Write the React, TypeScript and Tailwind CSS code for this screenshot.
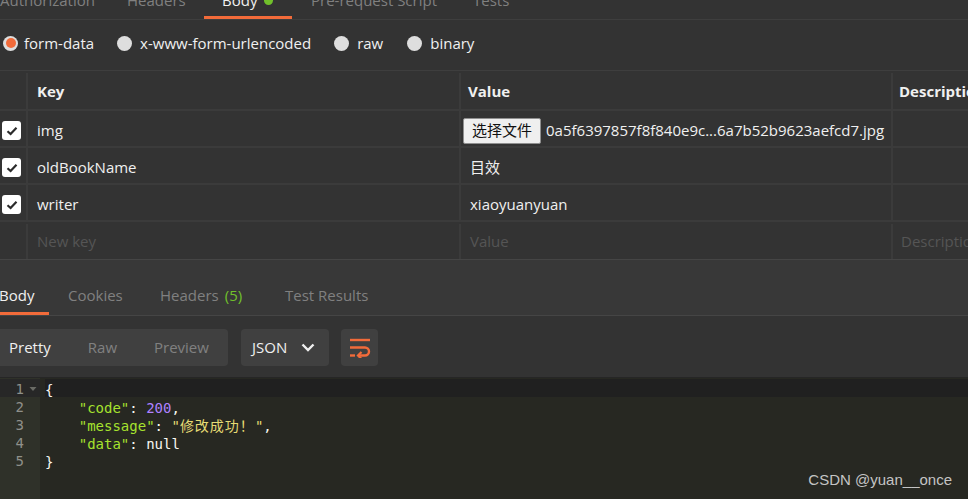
import React from 'react';

const ui = { fontFamily: '"Open Sans", "Noto Sans CJK SC", sans-serif' };
const mono = { fontFamily: '"DejaVu Sans Mono", "Noto Sans CJK SC", monospace' };

const topTabs = [
  { label: 'Authorization', w: 'w-[110px]', pl: 'pl-0' },
  { label: 'Headers', w: 'w-[94px]', pl: 'pl-[17px]' },
  { label: 'Body', w: 'w-[88px]', pl: 'pl-[18px]', active: true },
  { label: 'Pre-request Script', w: 'w-[162px]', pl: 'pl-[19px]' },
  { label: 'Tests', w: 'w-[80px]', pl: 'pl-[19px]' },
];

function Check() {
  return (
    <div className="w-[19px] h-[19px] rounded-[3px] bg-white flex items-center justify-center">
      <svg width="12" height="10" viewBox="0 0 12 10">
        <path d="M1.5 5.2 L4.6 8 L10.5 1.8" fill="none" stroke="#2b2b2b" strokeWidth="2.2" />
      </svg>
    </div>
  );
}

function Radio({ on }: { on?: boolean }) {
  return (
    <div className="w-[15px] h-[15px] rounded-full bg-[#dedede] flex items-center justify-center">
      {on && <div className="w-[10px] h-[10px] rounded-full bg-[#f26b3a]" />}
    </div>
  );
}

const rows = [
  { key: 'img', file: true },
  { key: 'oldBookName', value: '目效' },
  { key: 'writer', value: 'xiaoyuanyuan' },
];

export default function App() {
  return (
    <div className="w-[968px] h-[499px] overflow-hidden bg-[#333333] relative text-[15px]" style={ui}>
      {/* request tabs */}
      <div className="h-[20px] overflow-hidden border-b border-[#3e3e3e]">
        <div className="flex -mt-[10px]">
          {topTabs.map((t) => (
            <div
              key={t.label}
              className={`${t.w} ${t.pl} h-[29px] flex flex-col border-b-[3px] ${t.active ? 'border-[#f26b3a]' : 'border-transparent'}`}
            >
              <div className={`h-[20px] leading-[20px] flex items-center gap-[7px] ${t.active ? 'text-[#f0f0f0]' : 'text-[#808080]'}`}>
                {t.label}
                {t.active && <span className="w-[9px] h-[9px] rounded-full bg-[#71c02b]" />}
              </div>
            </div>
          ))}
        </div>
      </div>

      {/* body type radios */}
      <div className="h-[50px] flex items-center pl-[3px] pb-[4px] text-[#f0f0f0]">
        <Radio on />
        <span className="ml-[6px] mr-[23px]">form-data</span>
        <Radio />
        <span className="ml-[8px] mr-[23px]">x-www-form-urlencoded</span>
        <Radio />
        <span className="ml-[8px] mr-[24px]">raw</span>
        <Radio />
        <span className="ml-[8px]">binary</span>
      </div>

      {/* key / value table */}
      <div className="border-t border-[#3e3e3e] w-[1000px]">
        <div className="flex h-[40px] pt-[2px] border-b-2 border-[#3b3b3b] font-bold text-[#f0f0f0] text-[15px]">
          <div className="w-[28px] border-r-2 border-[#3b3b3b]" />
          <div className="w-[433px] pl-[9px] flex items-center border-r-2 border-[#3b3b3b]">Key</div>
          <div className="w-[432px] pl-[7px] flex items-center border-r-2 border-[#3b3b3b]">Value</div>
          <div className="flex-1 pl-[6px] flex items-center">Description</div>
        </div>
        {rows.map((r) => (
          <div key={r.key} className="flex h-[37px] border-b-2 border-[#3b3b3b] text-[#f0f0f0]">
            <div className="w-[28px] border-r-2 border-[#3b3b3b] flex items-center pl-[2px] pt-[4px]">
              <Check />
            </div>
            <div className="w-[433px] pl-[9px] pt-[4px] flex items-center border-r-2 border-[#3b3b3b]">{r.key}</div>
            <div className="w-[432px] pl-[9px] pt-[4px] flex items-center border-r-2 border-[#3b3b3b]">
              {r.file ? (
                <>
                  <span className="-ml-[7px] h-[26px] px-[8px] flex items-center bg-[#efefef] border border-[#8f8f8f] rounded-[2px] text-[#111] text-[15px]" style={{ fontFamily: '"Noto Sans CJK SC", sans-serif' }}>
                    选择文件
                  </span>
                  <span className="ml-[5px] whitespace-nowrap">0a5f6397857f8f840e9c...6a7b52b9623aefcd7.jpg</span>
                </>
              ) : (
                r.value
              )}
            </div>
            <div className="flex-1" />
          </div>
        ))}
        <div className="flex h-[37px] pt-[2px] text-[#555555]">
          <div className="w-[28px] border-r-2 border-[#3b3b3b]" />
          <div className="w-[433px] pl-[9px] flex items-center border-r-2 border-[#3b3b3b]">New key</div>
          <div className="w-[432px] pl-[9px] flex items-center border-r-2 border-[#3b3b3b]">Value</div>
          <div className="flex-1 pl-[8px] flex items-center">Description</div>
        </div>
      </div>

      {/* response tabs */}
      <div className="h-[57px] bg-[#383838] border-t border-[#2c2c2c] border-b border-[#454545] flex items-end">
        <div className="flex -ml-[1px] h-[46px] leading-[20px]">
          <div className="w-[50px] flex items-end pb-[7px] border-b-[3px] border-[#f26b3a] text-[#f0f0f0]">Body</div>
          <div className="ml-[19px] w-[92px] flex items-end pb-[7px] border-b-[3px] border-transparent text-[#808080]">Cookies</div>
          <div className="w-[125px] flex items-end pb-[7px] gap-[6px] border-b-[3px] border-transparent text-[#808080]">
            Headers <span className="text-[#71c02b]">(5)</span>
          </div>
          <div className="w-[120px] flex items-end pb-[7px] border-b-[3px] border-transparent text-[#808080]">Test Results</div>
        </div>
      </div>

      {/* toolbar */}
      <div className="h-[62px] pt-[2px] flex items-center border-b border-[#262626]">
        <div className="flex items-center w-[228px] h-[37px] rounded-r-[4px] bg-[#404040] pl-[9px]">
          <span className="text-[#f0f0f0]">Pretty</span>
          <span className="ml-[37px] text-[#808080]">Raw</span>
          <span className="ml-[37px] text-[#808080]">Preview</span>
        </div>
        <div className="ml-[13px] w-[88px] h-[37px] rounded-[4px] bg-[#404040] flex items-center pl-[11px] gap-[14px] text-[#f0f0f0]">
          JSON
          <svg width="14" height="9" viewBox="0 0 14 9">
            <path d="M1.5 1.5 L7 7 L12.5 1.5" fill="none" stroke="#f0f0f0" strokeWidth="2.4" />
          </svg>
        </div>
        <div className="ml-[12px] w-[37px] h-[37px] rounded-[4px] bg-[#404040] flex items-center justify-center">
          <svg width="22" height="20" viewBox="0 0 22 20">
            <path d="M1 2 H21" stroke="#f26b3a" strokeWidth="2.4" />
            <path d="M1 9.5 H16 a4 4 0 0 1 0 8 H10" fill="none" stroke="#f26b3a" strokeWidth="2.4" />
            <path d="M12.5 14 L9 17.5 L12.5 21" fill="none" stroke="#f26b3a" strokeWidth="2.2" />
            <path d="M1 17.5 H6" stroke="#f26b3a" strokeWidth="2.4" />
          </svg>
        </div>
      </div>

      {/* editor */}
      <div className="flex h-[200px] bg-[#272822] text-[14px] leading-[18px]" style={mono}>
        <div className="w-[40px] bg-[#2f3129] text-[#8f908a] pt-[1px]">
          {[1, 2, 3, 4, 5].map((n) => (
            <div key={n} className={`h-[18px] pt-[2px] flex items-center ${n === 1 ? 'bg-[#272727]' : ''}`}>
              <span className="w-[24px] text-right">{n}</span>
              {n === 1 && (
                <svg width="8" height="6" viewBox="0 0 8 6" className="ml-[5px]">
                  <path d="M0.5 1 L4 5 L7.5 1 Z" fill="#6a6b66" />
                </svg>
              )}
            </div>
          ))}
        </div>
        <div className="pl-[5px] pt-[1px] text-[#f8f8f2] whitespace-pre flex-1 [&>div]:h-[18px] [&>div]:pt-[2px]">
          <div className="bg-[#202020]">{'{'}</div>
          <div>
            {'    '}<span className="text-[#a6e22e]">"code"</span>: <span className="text-[#ae81ff]">200</span>,
          </div>
          <div>
            {'    '}<span className="text-[#a6e22e]">"message"</span>: <span className="text-[#e6db74]">"<span className="tracking-[1px]">修改成功！</span>"</span>,
          </div>
          <div>
            {'    '}<span className="text-[#a6e22e]">"data"</span>: null
          </div>
          <div>{'}'}</div>
        </div>
      </div>

      <div className="absolute right-[16px] bottom-[8px] text-[15px] text-[#c4c4c4]" style={{ fontFamily: '"Liberation Sans", Arial, sans-serif' }}>
        CSDN @yuan__once
      </div>
    </div>
  );
}
